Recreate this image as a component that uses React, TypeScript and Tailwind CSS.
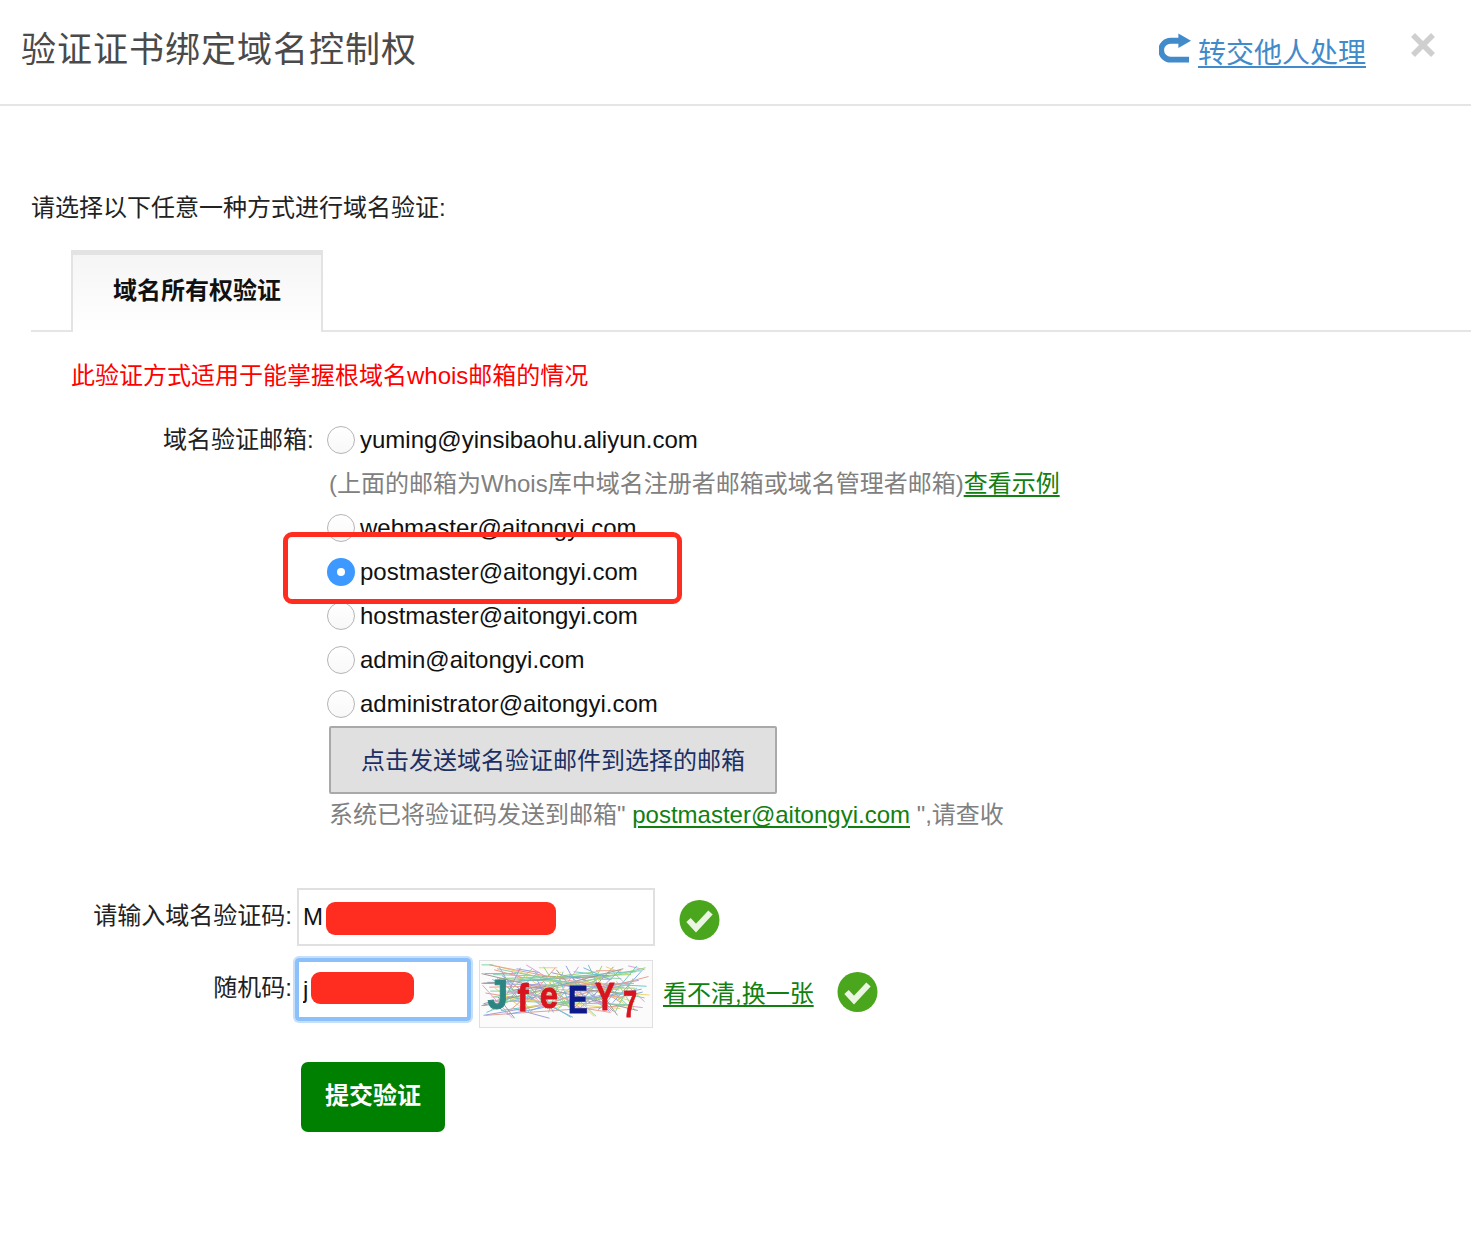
import React from "react";

function Radio({ checked }: { checked?: boolean }) {
  if (checked) {
    return (
      <span className="flex h-[28px] w-[28px] shrink-0 items-center justify-center rounded-full bg-[#3d99ff]">
        <span className="h-[8px] w-[8px] rounded-full bg-white" />
      </span>
    );
  }
  return <span className="h-[28px] w-[28px] shrink-0 rounded-full border border-[#b5b5b5] bg-gradient-to-b from-white to-[#f8f8f8]" />;
}

function EmailRow({ email, checked }: { email: string; checked?: boolean }) {
  return (
    <div className="flex h-[44px] items-center gap-[5px] pl-[327px]">
      <Radio checked={checked} />
      <span className="text-[24px] text-[#111]">{email}</span>
    </div>
  );
}

function Check() {
  return (
    <svg width="41" height="42" viewBox="0 0 41 42" className="block shrink-0">
      <circle cx="20.5" cy="21" r="20" fill="#4aa61c" />
      <path d="M9.5 21 L17 29 L31.5 13.5" fill="none" stroke="#eaf6e2" strokeWidth="6" />
    </svg>
  );
}

function Captcha() {
  const colors = ["#6cc896", "#d890cc", "#e4d050", "#6c9ce4", "#e48c78", "#50c0c0", "#8c8cd4", "#88cc60", "#888888"];
  const lines: React.ReactElement[] = [];
  for (let i = 0; i < 130; i++) {
    const x1 = (i * 37) % 174;
    const y1 = 4 + ((i * 23) % 50);
    const x2 = (x1 + 12 + ((i * 13) % 34)) % 174;
    const y2 = 4 + ((i * 41) % 56);
    lines.push(<line key={i} x1={x1} y1={y1} x2={x2} y2={y2} stroke={colors[i % colors.length]} strokeWidth="1" />);
  }
  return (
    <svg width="174" height="68" viewBox="0 0 174 68" className="block shrink-0 border border-[#e0e0e0] bg-[#fbfbfb]">
      <g opacity="0.85" className="blur-[0.4px]">{lines}</g>
      <g fontFamily="'Liberation Sans', sans-serif" fontWeight="700" className="blur-[0.4px]" strokeWidth="0.8">
        <text transform="translate(6 49) scale(1 1.15)" fill="#2b8583" stroke="#2b8583" fontSize="38">J</text>
        <text transform="translate(37 51) scale(1 1.2)" fill="#d8141e" stroke="#d8141e" fontSize="34">f</text>
        <text transform="translate(60 48) scale(1 1.1)" fill="#d8141e" stroke="#d8141e" fontSize="34">e</text>
        <text transform="translate(89 54) scale(0.85 1.1)" fill="#0c1a8c" stroke="#0c1a8c" fontSize="36">E</text>
        <text transform="translate(117 50) scale(0.85 1.1)" fill="#d8141e" stroke="#d8141e" fontSize="36">Y</text>
        <text transform="translate(146 58) scale(0.75 1.1)" fill="#d8141e" stroke="#d8141e" fontSize="34">7</text>
      </g>
    </svg>
  );
}

export default function App() {
  return (
    <div className="relative h-[1257px] w-[1480px] overflow-hidden bg-white font-['Liberation_Sans','Noto_Sans_CJK_SC',sans-serif] text-[24px] text-[#222]">
      {/* header */}
      <div className="flex h-[106px] w-[1471px] items-start justify-between border-b-2 border-[#e5e5e5] pl-[21px] pr-[35px]">
        <h1 className="mt-[28px] text-[35px] leading-[44px] tracking-[1px] text-[#4a4a4a]">验证证书绑定域名控制权</h1>
        <div className="flex items-start">
          <a className="mt-[33px] flex items-center gap-[8px] text-[28px] leading-[42px] text-[#428bca] underline underline-offset-[3px]">
            <svg width="32" height="32" viewBox="0 0 33 32" className="shrink-0 translate-x-[1px] -translate-y-[5px]">
              <path d="M21 7.5 H12 A9.75 9.75 0 0 0 12 27 H31" fill="none" stroke="#428bca" strokeWidth="6" />
              <path d="M20 0 L33 7.5 L20 15 Z" fill="#428bca" />
            </svg>
            转交他人处理
          </a>
          <svg width="26" height="26" viewBox="0 0 26 26" className="ml-[44px] mt-[32px]">
            <path d="M3 3 L23 23 M23 3 L3 23" stroke="#cfcfcf" strokeWidth="5.5" />
          </svg>
        </div>
      </div>

      <p className="ml-[31px] mt-[80px] leading-[44px]">请选择以下任意一种方式进行域名验证:</p>

      {/* tabs */}
      <div className="ml-[31px] mt-[20px] flex h-[82px] w-[1440px] items-end border-b-2 border-[#e5e5e5]">
        <div className="mb-[-2px] ml-[40px] flex h-[82px] w-[252px] items-start justify-center border-x-2 border-t-[5px] border-[#e3e3e3] bg-gradient-to-b from-[#f5f5f5] to-white pt-[18px]">
          <span className="font-bold leading-[36px] text-[#111]">域名所有权验证</span>
        </div>
      </div>

      <p className="ml-[71px] mt-[22px] leading-[44px] text-[#ff0000]">此验证方式适用于能掌握根域名whois邮箱的情况</p>

      {/* email options */}
      <div className="relative mt-[20px]">
        <span className="absolute left-[163px] top-0 leading-[44px]">域名验证邮箱:</span>
        <EmailRow email="yuming@yinsibaohu.aliyun.com" />
        <div className="flex h-[44px] items-center pl-[329px] text-[#808080]">
          (上面的邮箱为Whois库中域名注册者邮箱或域名管理者邮箱)<a className="text-[#118011] underline underline-offset-[3px]">查看示例</a>
        </div>
        <EmailRow email="webmaster@aitongyi.com" />
        <EmailRow email="postmaster@aitongyi.com" checked />
        <EmailRow email="hostmaster@aitongyi.com" />
        <EmailRow email="admin@aitongyi.com" />
        <EmailRow email="administrator@aitongyi.com" />
        {/* annotation box */}
        <div className="absolute left-[283px] top-[114px] h-[72px] w-[399px] rounded-[9px] border-[5px] border-[#ff2d1f]" />
      </div>

      <button className="ml-[329px] block h-[68px] w-[448px] rounded-[2px] border-2 border-[#a9a9a9] bg-[#e0e0e0] pt-[2px] text-[24px] text-[#1b2f63]">
        点击发送域名验证邮件到选择的邮箱
      </button>
      <p className="ml-[329px] -mt-[1px] flex h-[44px] items-center whitespace-pre text-[#808080]">
        系统已将验证码发送到邮箱" <a className="text-[#118011] underline underline-offset-[3px]">postmaster@aitongyi.com</a> ",请查收
      </p>

      {/* code */}
      <div className="mt-[51px] flex h-[58px] items-center">
        <label className="w-[296px] pb-[2px] pr-[4px] text-right">请输入域名验证码:</label>
        <div className="relative ml-[1px]">
          <input readOnly value="M" className="block h-[58px] w-[358px] border-2 border-[#e0e0e0] px-[4px] text-[24px] text-[#111]" />
          <span className="absolute left-[29px] top-[14px] h-[33px] w-[230px] rounded-[9px] bg-[#ff2d1f]" />
        </div>
        <span className="ml-[24px] mt-[6px]"><Check /></span>
      </div>

      {/* captcha */}
      <div className="mt-[12px] flex h-[70px] items-start">
        <label className="w-[294px] pr-[2px] pt-[8px] text-right leading-[44px]">随机码:</label>
        <div className="relative ml-[1px]">
          <input readOnly value="j" className="block h-[63px] w-[176px] rounded-[4px] border-[4px] border-[#8cc0fa] px-[4px] text-[24px] text-[#111] shadow-[0_0_0_2px_#c6e0fc]" />
          <span className="absolute left-[16px] top-[14px] h-[32px] w-[103px] rounded-[9px] bg-[#ff2d1f]" />
        </div>
        <div className="ml-[8px] mt-[2px]"><Captcha /></div>
        <a className="ml-[10px] mt-[14px] text-[#118011] leading-[44px] underline underline-offset-[3px]">看不清,换一张</a>
        <span className="ml-[23px] mt-[13px]"><Check /></span>
      </div>

      <button className="ml-[301px] mt-[34px] block h-[70px] w-[144px] rounded-[7px] bg-[#008000] pb-[2px] text-[24px] font-bold text-white">
        提交验证
      </button>
    </div>
  );
}
